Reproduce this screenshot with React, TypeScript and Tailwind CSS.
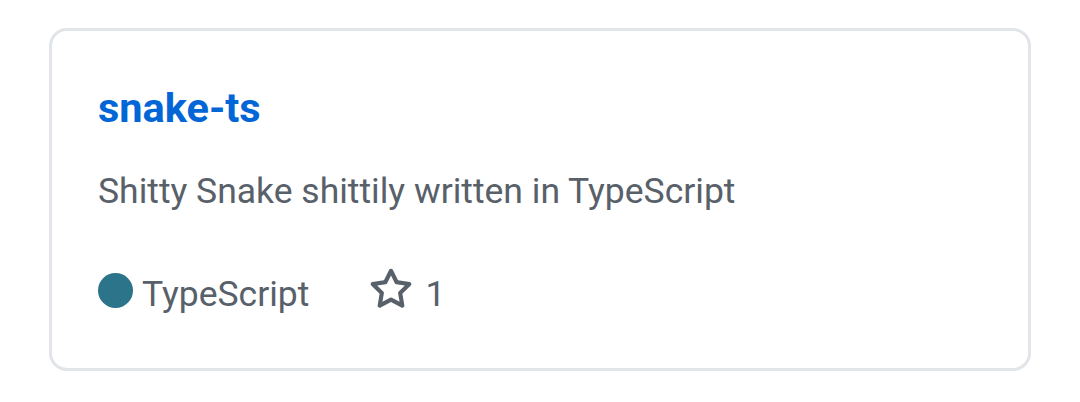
import React from 'react';

const StarIcon = ({ className }: { className?: string }) => (
  <svg viewBox="0 0 16 16" className={className} fill="currentColor" aria-hidden="true">
    <path d="M8 .25a.75.75 0 01.673.418l1.882 3.815 4.21.612a.75.75 0 01.416 1.279l-3.046 2.97.719 4.192a.75.75 0 01-1.088.791L8 12.347l-3.766 1.98a.75.75 0 01-1.088-.79l.72-4.194L.818 6.374a.75.75 0 01.416-1.28l4.21-.611L7.327.668A.75.75 0 018 .25zm0 2.445L6.615 5.5a.75.75 0 01-.564.41l-3.097.45 2.24 2.184a.75.75 0 01.216.664l-.528 3.084 2.769-1.456a.75.75 0 01.698 0l2.77 1.456-.53-3.084a.75.75 0 01.216-.664l2.24-2.183-3.096-.45a.75.75 0 01-.564-.41L8 2.694v.001z" />
  </svg>
);

export default function App() {
  return (
    <div className="w-[1080px] h-[402px] bg-white pl-[49px] pt-[28px]" style={{ fontFamily: 'Roboto, "Noto Sans", sans-serif' }}>
      <div className="w-[982px] h-[343px] border-[3px] border-[#e1e4e8] rounded-[18px] pl-[46px] pt-[52px] flex flex-col">
        {/* repo name */}
        <a href="#" className="text-[41.5px] leading-[50px] font-bold text-[#0366d6] w-fit">
          snake-ts
        </a>

        <p className="mt-[36px] text-[35.5px] leading-[44px] text-[#586069]">
          Shitty Snake shittily written in TypeScript
        </p>

        <div className="mt-[59px] flex items-start text-[35.5px] leading-[44px] text-[#586069]">
          <span className="w-[35px] h-[35px] rounded-full bg-[#2b7489] mt-[1px] shrink-0" />
          <span className="ml-[9px]">TypeScript</span>
          <StarIcon className="ml-[60px] w-[44px] h-[44px] -mt-[4px] text-[#586069]" />
          <span className="ml-[12px]">1</span>
        </div>
      </div>
    </div>
  );
}
